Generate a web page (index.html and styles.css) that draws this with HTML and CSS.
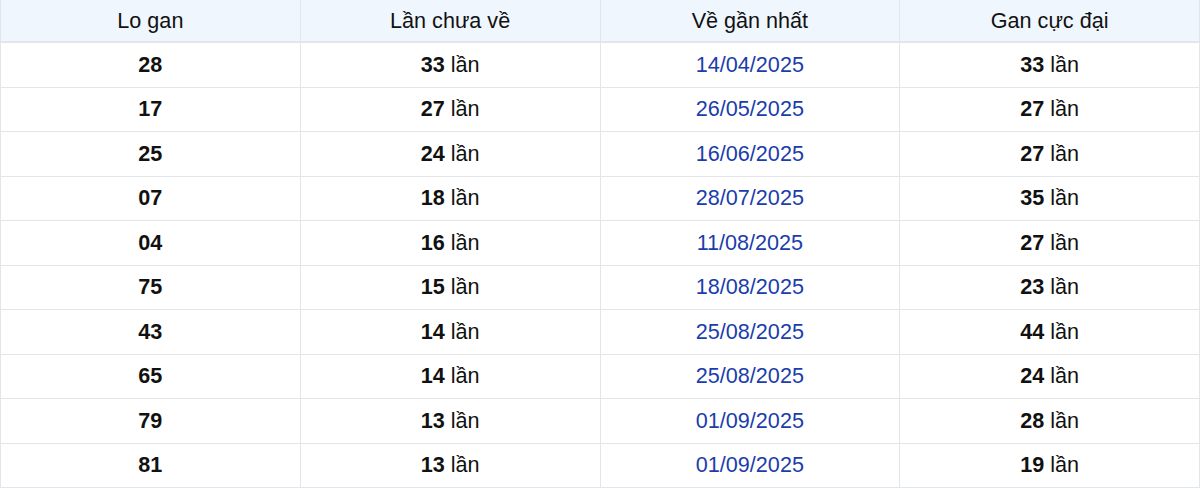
FILE: index.html
```html
<!DOCTYPE html>
<html lang="vi">
<head>
<meta charset="utf-8">
<link rel="stylesheet" href="styles.css">
</head>
<body>
<table class="gan">
<thead>
<tr><th>Lo gan</th><th>Lần chưa về</th><th>Về gần nhất</th><th>Gan cực đại</th></tr>
</thead>
<tbody>
<tr><td><b>28</b></td><td><b>33</b> lần</td><td class="date">14/04/2025</td><td><b>33</b> lần</td></tr>
<tr><td><b>17</b></td><td><b>27</b> lần</td><td class="date">26/05/2025</td><td><b>27</b> lần</td></tr>
<tr><td><b>25</b></td><td><b>24</b> lần</td><td class="date">16/06/2025</td><td><b>27</b> lần</td></tr>
<tr><td><b>07</b></td><td><b>18</b> lần</td><td class="date">28/07/2025</td><td><b>35</b> lần</td></tr>
<tr><td><b>04</b></td><td><b>16</b> lần</td><td class="date">11/08/2025</td><td><b>27</b> lần</td></tr>
<tr><td><b>75</b></td><td><b>15</b> lần</td><td class="date">18/08/2025</td><td><b>23</b> lần</td></tr>
<tr><td><b>43</b></td><td><b>14</b> lần</td><td class="date">25/08/2025</td><td><b>44</b> lần</td></tr>
<tr><td><b>65</b></td><td><b>14</b> lần</td><td class="date">25/08/2025</td><td><b>24</b> lần</td></tr>
<tr><td><b>79</b></td><td><b>13</b> lần</td><td class="date">01/09/2025</td><td><b>28</b> lần</td></tr>
<tr><td><b>81</b></td><td><b>13</b> lần</td><td class="date">01/09/2025</td><td><b>19</b> lần</td></tr>
</tbody>
</table>
</body>
</html>
```
FILE: styles.css
```css
html, body {
  margin: 0;
  padding: 0;
  background: #ffffff;
}
body {
  font-family: "Liberation Sans", Arial, sans-serif;
  color: #111111;
}
.gan {
  width: 1200px;
  border-collapse: collapse;
  table-layout: fixed;
  font-size: 21.6px;
}
.gan th, .gan td {
  border: 1px solid #e3e5e8;
  text-align: center;
  padding: 0;
}
.gan th {
  height: 41px;
  background: #eff6fe;
  font-weight: 400;
  border-top: none;
  border-bottom: 2px solid #e3e5e8;
}
.gan td {
  height: 43.5px;
}
.gan b {
  font-weight: 700;
}
.gan .date {
  color: #1a3dab;
}
```
